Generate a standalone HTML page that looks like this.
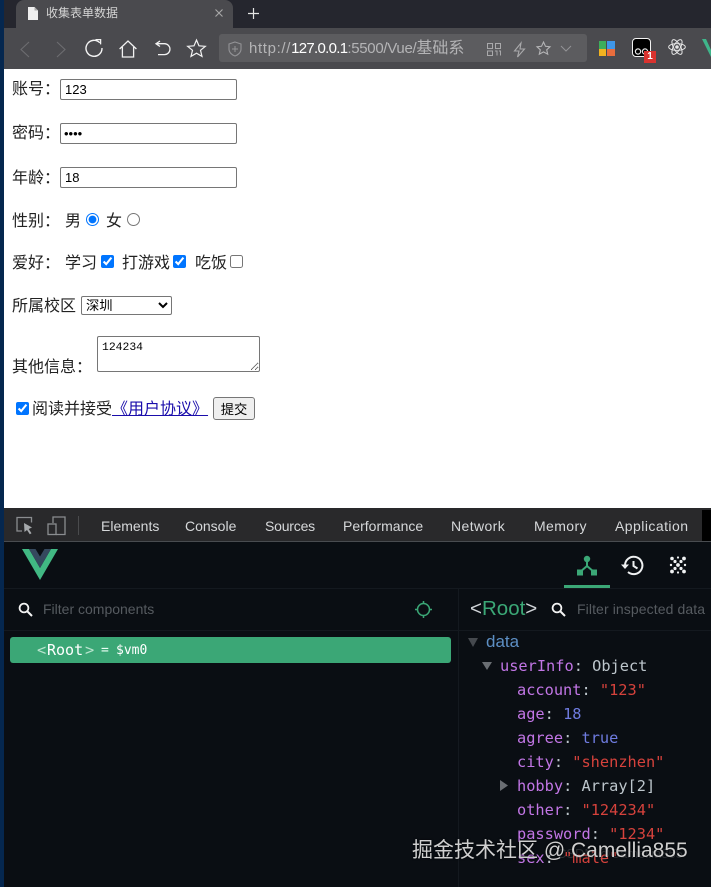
<!DOCTYPE html>
<html lang="zh">
<head>
<meta charset="utf-8">
<title>收集表单数据</title>
<style>
html,body{margin:0;padding:0;width:711px;height:887px;overflow:hidden;background:#0a0e13}
body{position:relative;font-family:"Liberation Sans","Noto Sans CJK SC",sans-serif}
.a{position:absolute;white-space:nowrap}
svg{position:absolute;overflow:visible}
.f{font-size:16px;line-height:20px;color:#222}
input,select,textarea,button{position:absolute;margin:0;box-sizing:border-box;font-family:"Liberation Sans","Noto Sans CJK SC",sans-serif}
input[type=text]{left:60px;width:177px;height:21px;font-size:13px;padding:1px 2px 1px 4px;border:1px solid #767676;border-radius:2px;color:#000;background:#fff;outline:0}
.tab{position:absolute;top:518px;font-size:14px;line-height:17px;color:#d6d8da;white-space:nowrap}
.m{position:absolute;font-family:"DejaVu Sans Mono","Noto Sans CJK SC",monospace;font-size:15.3px;line-height:20px;white-space:nowrap;color:#bdc6cc}
.k{color:#c276e6}.s{color:#d6423c}.n{color:#6f7ce0}
</style>
</head>
<body>
<!-- desktop strip -->
<div class="a" style="left:0;top:0;width:4px;height:887px;background:#05274f"></div>

<!-- browser chrome -->
<div class="a" style="left:4px;top:0;width:707px;height:28px;background:#25262e"></div>
<div class="a" style="left:16px;top:0;width:217px;height:28px;background:#4a4a4e;border-radius:8px 8px 0 0"></div>
<div class="a" style="left:4px;top:28px;width:707px;height:41px;background:#4a4a4e"></div>
<svg style="left:27px;top:7px" width="12" height="13" viewBox="0 0 12 13"><path d="M1 0H7.5L11 3.5V13H1Z" fill="#eeeeee"/><path d="M7.5 0V3.5H11" fill="#aaa"/></svg>
<div class="a" style="left:46px;top:5px;font-size:12px;line-height:17px;color:#d4d4d4">收集表单数据</div>
<svg style="left:214px;top:8px" width="10" height="10"><path d="M1.5 1.5L8.5 8.5M8.5 1.5L1.5 8.5" stroke="#a8a8a8" stroke-width="1.1"/></svg>
<svg style="left:247px;top:7px" width="13" height="13"><path d="M6.5 1V12M1 6.5H12" stroke="#e4e4e4" stroke-width="1.2"/></svg>

<!-- toolbar icons -->
<svg style="left:19px;top:41px" width="12" height="17" fill="none"><path d="M10 1L2 8.5L10 16" stroke="#6d6d70" stroke-width="1.1"/></svg>
<svg style="left:55px;top:41px" width="12" height="17" fill="none"><path d="M2 1L10 8.5L2 16" stroke="#6d6d70" stroke-width="1.1"/></svg>
<svg style="left:84px;top:38px" width="20" height="20" fill="none"><path d="M15.8 4.8A8 8 0 1 0 18 10" stroke="#f2f2f2" stroke-width="1.4"/><path d="M11.5 1.6L16.6 1.6L16.6 6.4" stroke="#f2f2f2" stroke-width="1.3"/></svg>
<svg style="left:119px;top:40px" width="18" height="18" fill="none"><path d="M.6 9L9 1L17.4 9M3.4 7V17H14.6V7" stroke="#f2f2f2" stroke-width="1.3"/></svg>
<svg style="left:154px;top:40px" width="17" height="17" fill="none"><path d="M2.5 3.7H10.5A5.2 5.2 0 0 1 10.5 14.6H4" stroke="#f2f2f2" stroke-width="1.3"/><path d="M6 1L2 3.7L6 6.5" stroke="#f2f2f2" stroke-width="1.3"/></svg>
<svg style="left:187px;top:39px" width="19" height="18" fill="none"><path d="M9.5 1L12 6.8L18.3 7.3L13.5 11.3L15 17.4L9.5 14.2L4 17.4L5.5 11.3L.7 7.3L7 6.8Z" stroke="#f2f2f2" stroke-width="1.2"/></svg>

<!-- address bar -->
<div class="a" style="left:219px;top:34px;width:368px;height:28px;background:#5c5c5f;border-radius:3px"></div>
<svg style="left:228px;top:41px" width="14" height="16" fill="none"><path d="M7 1L13 3V8C13 11.5 10 14 7 15C4 14 1 11.5 1 8V3Z" stroke="#939396" stroke-width="1.1"/><path d="M7 5V11M4 8H10" stroke="#939396" stroke-width="1"/></svg>
<div class="a" style="left:249px;top:39px;font-size:15px;line-height:20px;color:#b4b4b6;font-family:'Liberation Sans','Noto Sans CJK SC',sans-serif"><span style="letter-spacing:.65px">http://</span><span style="color:#fff;letter-spacing:-.7px">127.0.0.1</span><span style="letter-spacing:-.3px">:5500/Vue/</span><span style="font-size:16px">基础系</span></div>
<div class="a" style="left:470px;top:34px;width:18px;height:28px;background:#5c5c5f"></div>
<svg style="left:487px;top:43px" width="14" height="13" fill="none" stroke="#a9a9ab"><path d="M.5.5H5.5V5.5H.5ZM8.5.5H13.5V5.5H8.5ZM.5 8H5.5V12.5H.5ZM8 8H10V12.5M12 8H13.5V12.5"/></svg>
<svg style="left:513px;top:42px" width="13" height="16" fill="none"><path d="M8 1L1.5 9H6L4.5 15L11.5 7H7Z" stroke="#a9a9ab" stroke-width="1.1"/></svg>
<svg style="left:536px;top:41px" width="15" height="14" fill="none"><path d="M7.5 1L9.5 5.3L14 5.8L10.7 8.8L11.7 13.2L7.5 10.9L3.3 13.2L4.3 8.8L1 5.8L5.5 5.3Z" stroke="#b4b4b6" stroke-width="1.1"/></svg>
<svg style="left:560px;top:45px" width="12" height="8" fill="none"><path d="M1 1L6 6L11 1" stroke="#939396" stroke-width="1"/></svg>

<!-- extensions -->
<div class="a" style="left:599px;top:41px;width:7px;height:8px;background:#3dae5b"></div>
<div class="a" style="left:607px;top:41px;width:8px;height:8px;background:#3f97e8"></div>
<div class="a" style="left:599px;top:49px;width:7px;height:7px;background:#f2b21f"></div>
<div class="a" style="left:607px;top:49px;width:8px;height:7px;background:#e96d3d"></div>
<div class="a" style="left:632px;top:38px;width:17px;height:17px;background:#000;border:1px solid #f2f2f2;border-radius:4px"></div>
<svg style="left:634px;top:47px" width="16" height="9" fill="none"><circle cx="4" cy="4.5" r="2.6" stroke="#e8e8e8" stroke-width="1.2"/><circle cx="11" cy="4.5" r="2.6" stroke="#e8e8e8" stroke-width="1.2"/></svg>
<div class="a" style="left:644px;top:51px;width:12px;height:12px;background:#d9332f;color:#fff;font-size:10px;font-weight:bold;line-height:12px;text-align:center">1</div>
<svg style="left:668px;top:38px" width="18" height="18" viewBox="0 0 18 18" fill="none" stroke="#e6e6e6" stroke-width="1"><ellipse cx="9" cy="9" rx="8.3" ry="3.4"/><ellipse cx="9" cy="9" rx="8.3" ry="3.4" transform="rotate(60 9 9)"/><ellipse cx="9" cy="9" rx="8.3" ry="3.4" transform="rotate(120 9 9)"/><circle cx="9" cy="9" r="1.3" fill="#e6e6e6"/></svg>
<svg style="left:702px;top:39px" width="9" height="18"><path d="M0 0H4L9 11V18Z" fill="#3fb58a"/></svg>

<!-- page -->
<div class="a" style="left:4px;top:69px;width:707px;height:439px;background:#fff"></div>

<div class="a f" style="left:12px;top:80px">账号：</div>
<input type="text" value="123" style="top:79px">
<div class="a f" style="left:12px;top:124px">密码：</div>
<input type="text" value="••••" style="top:123px;font-size:13px;padding-left:3px;letter-spacing:0">
<div class="a f" style="left:12px;top:169px">年龄：</div>
<input type="text" value="18" style="top:167px">

<div class="a f" style="left:12px;top:212px">性别：</div>
<div class="a f" style="left:65px;top:212px">男</div>
<input type="radio" checked style="left:86px;top:213px;width:13px;height:13px">
<div class="a f" style="left:106px;top:212px">女</div>
<input type="radio" style="left:127px;top:213px;width:13px;height:13px">

<div class="a f" style="left:12px;top:254px">爱好：</div>
<div class="a f" style="left:65px;top:254px">学习</div>
<input type="checkbox" checked style="left:101px;top:255px;width:13px;height:13px">
<div class="a f" style="left:122px;top:254px">打游戏</div>
<input type="checkbox" checked style="left:173px;top:255px;width:13px;height:13px">
<div class="a f" style="left:195px;top:254px">吃饭</div>
<input type="checkbox" style="left:230px;top:255px;width:13px;height:13px">

<div class="a f" style="left:12px;top:297px">所属校区</div>
<select style="left:81px;top:296px;width:91px;height:19px;font-size:13.3px;padding:0;background:#fff;color:#000;border:1px solid #767676;border-radius:2px"><option>深圳</option></select>

<div class="a f" style="left:12px;top:358px">其他信息：</div>
<textarea style="left:97px;top:336px;width:163px;height:36px;font-family:'Liberation Mono',monospace;font-size:11.4px;padding:4px 4px;line-height:15px;border:1px solid #767676;border-radius:2px;color:#000">124234</textarea>

<input type="checkbox" checked style="left:16px;top:402px;width:13px;height:13px">
<div class="a f" style="left:32px;top:400px">阅读并接受<span style="color:#1a0dab;text-decoration:underline">《用户协议》</span></div>
<button style="left:213px;top:397px;width:42px;height:23px;font-size:13.3px;padding:0;background:#efefef;border:1px solid #767676;border-radius:3px;color:#000">提交</button>

<!-- devtools tab bar -->
<div class="a" style="left:4px;top:508px;width:707px;height:34px;background:#29292b;border-bottom:1px solid #494c50;box-sizing:border-box"></div>
<div class="a" style="left:702px;top:510px;width:9px;height:31px;background:#000"></div>
<svg style="left:16px;top:516px" width="18" height="19" fill="none"><path d="M15.5 6.5V1.5H1V15H6" stroke="#8a8d90" stroke-width="1.3"/><path d="M8 7L16 11.5L12.7 13L15.5 17.2L13.8 18.2L11 14L8.5 16Z" fill="#a5a8ab"/></svg>
<svg style="left:47px;top:516px" width="19" height="20" fill="none"><path d="M6 7V1H18V18.5H9" stroke="#8a8d90" stroke-width="1.3"/><rect x="1" y="8" width="8" height="10.5" stroke="#8a8d90" stroke-width="1.3"/></svg>
<div class="a" style="left:78px;top:516px;width:1px;height:19px;background:#4a4b4d"></div>
<div class="tab" style="left:101px">Elements</div>
<div class="tab" style="left:185px">Console</div>
<div class="tab" style="left:265px;letter-spacing:-.2px">Sources</div>
<div class="tab" style="left:343px">Performance</div>
<div class="tab" style="left:451px;letter-spacing:.4px">Network</div>
<div class="tab" style="left:534px;letter-spacing:.4px">Memory</div>
<div class="tab" style="left:615px;letter-spacing:.45px">Application</div>

<!-- vue devtools header -->
<div class="a" style="left:4px;top:542px;width:707px;height:345px;background:#0a0e13"></div>
<svg style="left:22px;top:549px" width="36" height="31" viewBox="0 0 36 31"><path d="M0 0H7L18 19L29 0H36L18 31Z" fill="#41b883"/><path d="M7 0H13.5L18 7.5L22.5 0H29L18 19Z" fill="#35495e"/></svg>
<div class="a" style="left:4px;top:588px;width:707px;height:1px;background:#14191f"></div>
<svg style="left:576px;top:555px" width="22" height="21" viewBox="0 0 22 21"><circle cx="11" cy="4" r="3.2" fill="#3ba776"/><path d="M11 6V11L4 17M11 11L18 17" stroke="#3ba776" stroke-width="2" fill="none"/><rect x="1" y="14.5" width="6" height="6" fill="#3ba776"/><rect x="15" y="14.5" width="6" height="6" fill="#3ba776"/></svg>
<div class="a" style="left:564px;top:585px;width:46px;height:3px;background:#3ba776"></div>
<svg style="left:620px;top:555px" width="24" height="21" viewBox="0 0 24 21" fill="none"><path d="M5 10.5A8.7 8.7 0 1 1 8 17" stroke="#eef0f1" stroke-width="2"/><path d="M1 9.5H9L5 14Z" fill="#eef0f1"/><path d="M13.5 6V11L17.5 13.5" stroke="#eef0f1" stroke-width="2"/></svg>
<svg style="left:669px;top:556px" width="18" height="18" fill="#f0f2f3"><circle cx="3" cy="2.5" r="1.8"/><circle cx="9" cy="1.5" r="1.1"/><circle cx="15" cy="2.5" r="1.9"/><circle cx="6" cy="5.5" r="1.6"/><circle cx="12" cy="5.5" r="1.6"/><circle cx="2" cy="9" r="1.2"/><circle cx="9" cy="9" r="1.9"/><circle cx="16" cy="9" r="1.2"/><circle cx="6" cy="12.5" r="1.6"/><circle cx="12" cy="12.5" r="1.6"/><circle cx="3" cy="15.5" r="1.9"/><circle cx="9" cy="16.5" r="1.1"/><circle cx="15" cy="15.5" r="1.9"/></svg>

<!-- left panel -->
<svg style="left:18px;top:602px" width="15" height="15" fill="none"><circle cx="6" cy="6" r="4.4" stroke="#f4f4f4" stroke-width="1.8"/><path d="M9.5 9.5L14 14" stroke="#f4f4f4" stroke-width="2"/></svg>
<div class="a" style="left:43px;top:600px;font-size:14px;line-height:18px;color:#565b60">Filter components</div>
<svg style="left:414px;top:600px" width="19" height="19" fill="none" stroke="#3ba776" stroke-width="1.5"><circle cx="9.5" cy="9.5" r="6"/><path d="M9.5 1V4M9.5 15V18M1 9.5H4M15 9.5H18"/></svg>
<div class="a" style="left:4px;top:630px;width:707px;height:1px;background:#14191f"></div>
<div class="a" style="left:458px;top:589px;width:1px;height:298px;background:#14191f"></div>
<div class="a" style="left:10px;top:637px;width:441px;height:26px;background:#3ba776;border-radius:3px"></div>
<div class="m" style="left:37px;top:640px;color:#b9e4ce">&lt;</div>
<div class="m" style="left:47px;top:640px;color:#fff;font-size:15px">Root</div>
<div class="m" style="left:85px;top:640px;color:#b9e4ce">&gt;</div>
<div class="m" style="left:101px;top:641px;font-size:13px;color:#eafff4">=</div>
<div class="m" style="left:116px;top:641px;font-size:13px;color:#fff">$vm0</div>

<!-- right panel -->
<div class="a" style="left:470px;top:596px;font-size:20.5px;line-height:26px;color:#3ba776"><span style="color:#d0d4d8">&lt;</span>Root<span style="color:#d0d4d8">&gt;</span></div>
<svg style="left:551px;top:602px" width="15" height="15" fill="none"><circle cx="6" cy="6" r="4.4" stroke="#f4f4f4" stroke-width="1.8"/><path d="M9.5 9.5L14 14" stroke="#f4f4f4" stroke-width="2"/></svg>
<div class="a" style="left:577px;top:600px;font-size:14px;line-height:18px;color:#565b60;letter-spacing:.1px">Filter inspected data</div>

<svg style="left:468px;top:638px" width="10" height="9"><path d="M0 0H10L5 9Z" fill="#45494e"/></svg>
<div class="a" style="left:486px;top:631px;font-size:17px;line-height:22px;color:#5d8fc4">data</div>
<svg style="left:482px;top:662px" width="10" height="8"><path d="M0 0H10L5 8Z" fill="#6a6e73"/></svg>
<div class="m" style="left:500px;top:656px"><span class="k">userInfo</span>: Object</div>
<div class="m" style="left:517px;top:680px"><span class="k">account</span>: <span class="s">"123"</span></div>
<div class="m" style="left:517px;top:704px"><span class="k">age</span>: <span class="n">18</span></div>
<div class="m" style="left:517px;top:728px"><span class="k">agree</span>: <span class="n">true</span></div>
<div class="m" style="left:517px;top:752px"><span class="k">city</span>: <span class="s">"shenzhen"</span></div>
<svg style="left:500px;top:780px" width="8" height="11"><path d="M0 0L8 5.5L0 11Z" fill="#6a6e73"/></svg>
<div class="m" style="left:517px;top:776px"><span class="k">hobby</span>: Array[2]</div>
<div class="m" style="left:517px;top:800px"><span class="k">other</span>: <span class="s">"124234"</span></div>
<div class="m" style="left:517px;top:824px"><span class="k">password</span>: <span class="s">"1234"</span></div>
<div class="m" style="left:517px;top:848px"><span class="k">sex</span>: <span class="s">"male"</span></div>

<!-- watermark -->
<div class="a" style="left:557px;top:846px;font-size:13px;line-height:16px;color:rgba(255,255,255,.14)">CSDN @Camellia855</div>
<div class="a" style="left:412px;top:838px;font-size:21px;line-height:26px;color:#cfcfcf;text-shadow:0 0 2px rgba(0,0,0,.7)">掘金技术社区 @ Camellia855</div>
</body>
</html>
